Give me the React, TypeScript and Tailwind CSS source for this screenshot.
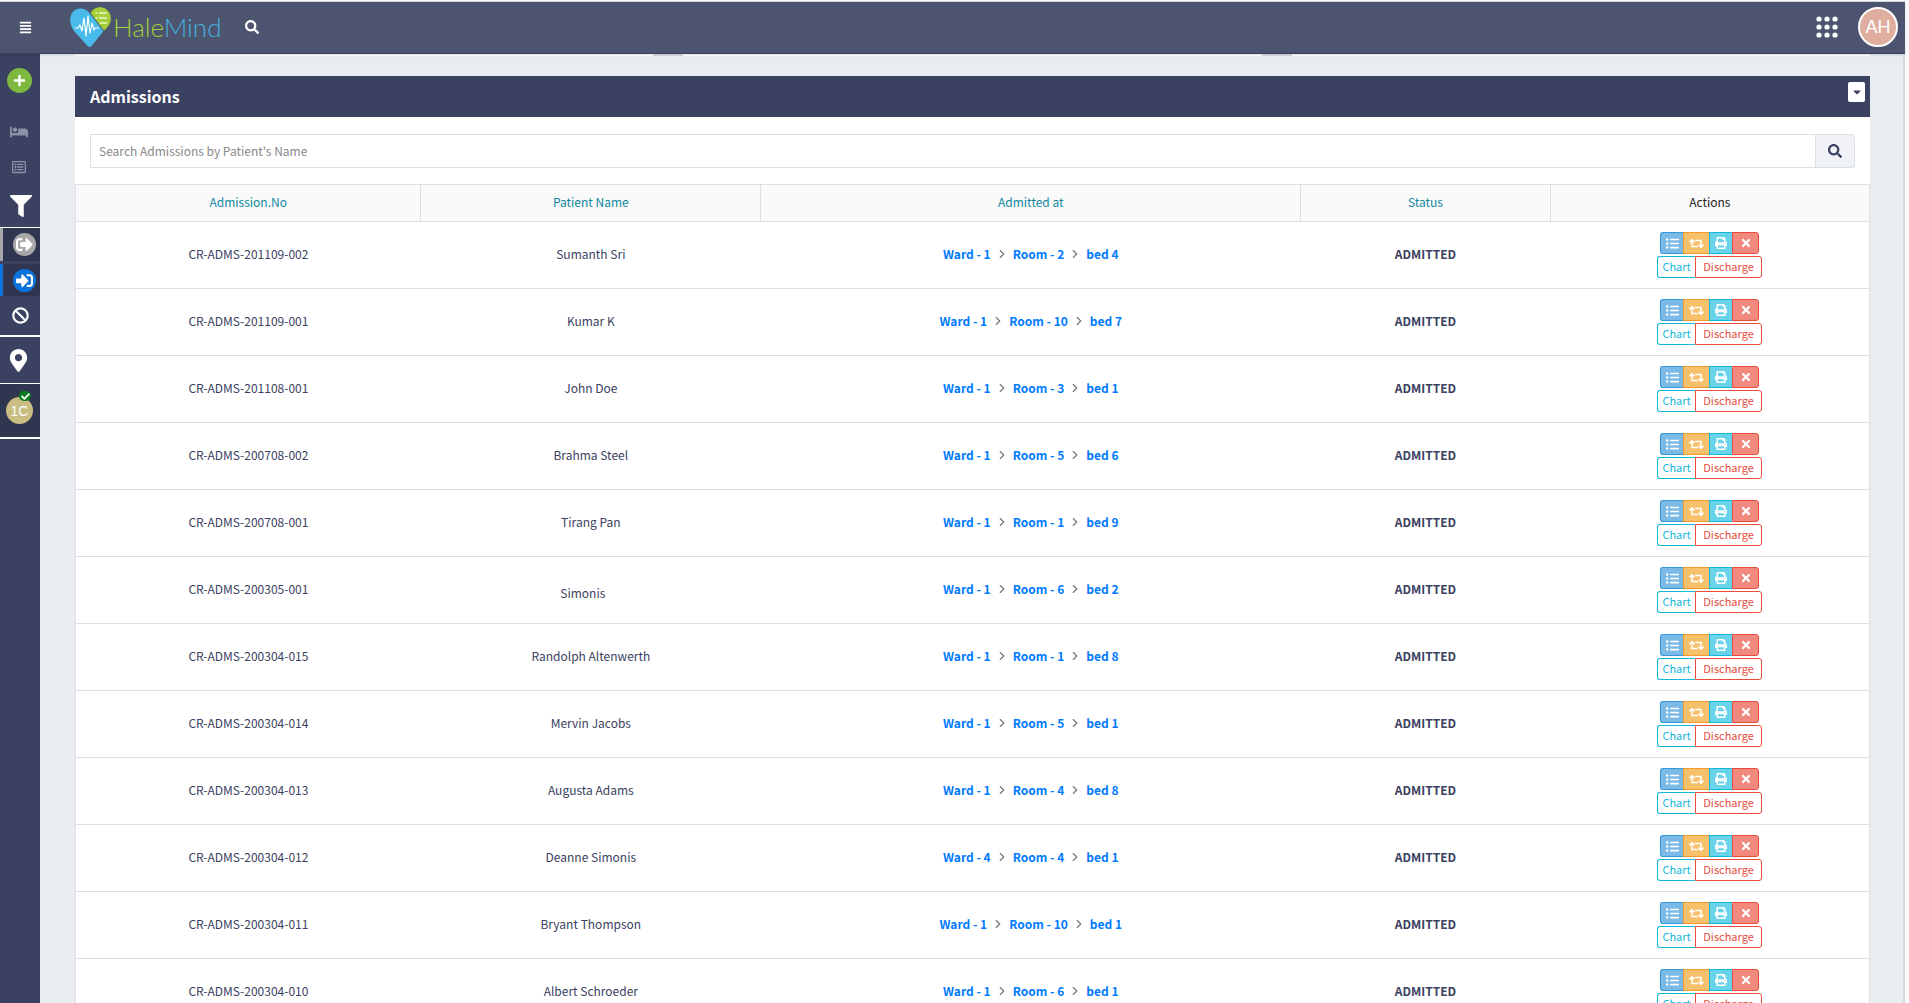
import React from "react";
import {
  FaAlignJustify, FaBan, FaBed, FaCaretDown, FaCheck, FaFilter, FaListUl,
  FaMapMarkerAlt, FaPlus, FaPrint, FaRegListAlt, FaRetweet, FaSearch, FaSignInAlt,
  FaSignOutAlt, FaTimes,
} from "react-icons/fa";
import { ChevronRight } from "lucide-react";

type Admission = { no: string; name: string; place: [string, string, string]; spacer?: boolean };

const admissions: Admission[] = [
  { no: "CR-ADMS-201109-002", name: "Sumanth Sri", place: ["Ward - 1", "Room - 2", "bed 4"] },
  { no: "CR-ADMS-201109-001", name: "Kumar K", place: ["Ward - 1", "Room - 10", "bed 7"] },
  { no: "CR-ADMS-201108-001", name: "John Doe", place: ["Ward - 1", "Room - 3", "bed 1"] },
  { no: "CR-ADMS-200708-002", name: "Brahma Steel", place: ["Ward - 1", "Room - 5", "bed 6"] },
  { no: "CR-ADMS-200708-001", name: "Tirang Pan", place: ["Ward - 1", "Room - 1", "bed 9"] },
  { no: "CR-ADMS-200305-001", name: "Simonis", place: ["Ward - 1", "Room - 6", "bed 2"], spacer: true },
  { no: "CR-ADMS-200304-015", name: "Randolph Altenwerth", place: ["Ward - 1", "Room - 1", "bed 8"] },
  { no: "CR-ADMS-200304-014", name: "Mervin Jacobs", place: ["Ward - 1", "Room - 5", "bed 1"] },
  { no: "CR-ADMS-200304-013", name: "Augusta Adams", place: ["Ward - 1", "Room - 4", "bed 8"] },
  { no: "CR-ADMS-200304-012", name: "Deanne Simonis", place: ["Ward - 4", "Room - 4", "bed 1"] },
  { no: "CR-ADMS-200304-011", name: "Bryant Thompson", place: ["Ward - 1", "Room - 10", "bed 1"] },
  { no: "CR-ADMS-200304-010", name: "Albert Schroeder", place: ["Ward - 1", "Room - 6", "bed 1"] },
];

function Logo() {
  return (
    <a href="#home" aria-label="HaleMind" className="flex items-center">
      <svg viewBox="0 0 41 40" className="h-10 w-[41px]" aria-hidden="true">
        <path d="M20.500 6.500 C23 0 31 -1.500 36 2 C41.500 6 42 13 39 18 C37 21 35 23 33.500 24 Z" fill="#a4cf38" />
        <path d="M20 6.500 C15 0 6 0 2 6 C-1 11 0 19 4 24 L17.500 39 Q19.500 41 21.500 39 L33.500 24 Z" fill="#49bbea" />
        <path d="M20 6 L34 24" stroke="#4d556f" strokeWidth="1" />
        <path d="M25.500 6h1.800M29 6h8M25.500 11h1.800M29 11h8M30 16h7" stroke="#eef7d2" strokeWidth="1.400" />
        <path d="M5 21h3l2-3 2 6 2-13 2 18 2-20 2 17 2-10 2 7 1-2h4" stroke="#fff" strokeWidth="1.200" fill="none" strokeLinejoin="round" />
      </svg>
      <span className="ml-[2px] font-['Lato'] text-[26px] font-light leading-10">
        <span className="text-[#a4cf38]">Hale</span>
        <span className="text-[#46b0dc]">Mind</span>
      </span>
    </a>
  );
}

function Navbar() {
  return (
    <header className="relative z-10 flex h-[52px] shrink-0 items-center border-b border-[#3b4163] bg-[#4d546f] pb-px pl-[19px] pr-[7px] text-white shadow">
      <button type="button" aria-label="Toggle menu"><FaAlignJustify className="size-[13px]" /></button>
      <div className="ml-[38px]"><Logo /></div>
      <button type="button" aria-label="Search" className="ml-6"><FaSearch className="size-[14px]" /></button>
      <button type="button" aria-label="Apps" className="ml-auto">
        <svg viewBox="0 0 22 22" className="size-[22px]" fill="#fff">
          {[3, 11, 19].map((y) => [3, 11, 19].map((x) => <circle key={`${x}-${y}`} cx={x} cy={y} r="2.600" />))}
        </svg>
      </button>
      <button type="button" className="ml-5 flex size-10 items-center justify-center rounded-full border-2 border-white bg-[#dfae9f] font-['Liberation_Sans'] text-lg">AH</button>
    </header>
  );
}

function Sidebar() {
  return (
    <nav className="flex w-10 shrink-0 flex-col bg-[#3a4161] text-white">
      <button type="button" aria-label="Add" className="ml-[7px] mt-[14px] flex size-[25px] items-center justify-center rounded-full bg-[#7cb93e]">
        <FaPlus className="size-[13px]" />
      </button>
      <a href="#beds" aria-label="Beds" className="mt-[30px] flex h-[17px] items-center pl-[10px] text-[#8d92a6]"><FaBed className="size-[18px]" /></a>
      <a href="#list" aria-label="List" className="mt-[18px] flex h-[17px] items-center pl-3 text-[#8d92a6]"><FaRegListAlt className="size-[14px]" /></a>
      <a href="#filter" aria-label="Filter" className="mt-[19px] flex h-[34px] items-center border-b border-white pb-[9px] pl-[10px]"><FaFilter className="size-[22px]" /></a>
      <a href="#out" aria-label="Discharged" className="flex h-[33px] items-center border-l-[3px] border-[#a8a8a8] bg-[#30364f] pl-[10px]">
        <span className="flex size-[23px] items-center justify-center rounded-full bg-[#a8a8a8]"><FaSignOutAlt className="size-[17px]" /></span>
      </a>
      <a href="#in" aria-label="Admitted" className="mt-[3px] flex h-8 items-center border-l-[3px] border-[#0a74da] bg-[#30364f] pl-[10px]">
        <span className="flex size-[23px] items-center justify-center rounded-full bg-[#0a74da]"><FaSignInAlt className="size-[17px]" /></span>
      </a>
      <a href="#cancelled" aria-label="Cancelled" className="flex h-[41px] items-center border-b-2 border-white pl-3"><FaBan className="size-[17px]" /></a>
      <a href="#location" aria-label="Location" className="flex h-[47px] items-center border-b border-white pl-[7px]"><FaMapMarkerAlt className="size-[23px]" /></a>
      <a href="#center" className="flex h-[55px] items-center border-b-2 border-white bg-[#30364f] pl-[6px]">
        <span className="relative flex size-[27px] items-center justify-center rounded-full bg-[#cabd82] font-['Liberation_Sans'] text-sm">
          1C
          <span className="absolute -top-[6px] left-[13px] flex h-[10px] w-3 items-center justify-center rounded-full bg-[#0a7d1f]"><FaCheck className="size-[9px]" /></span>
        </span>
      </a>
    </nav>
  );
}

function Actions() {
  return (
    <div className="flex flex-col items-center gap-[2px]">
      <div className="flex text-xs text-white">
        <button type="button" aria-label="Details" className="flex h-[22px] w-[23px] items-center justify-center rounded-l-[3px] border border-r-0 border-[#3498db] bg-[#7bbae6]"><FaListUl className="size-[13px]" /></button>
        <button type="button" aria-label="Transfer" className="flex h-[22px] w-[26px] items-center justify-center border border-r-0 border-[#f39c2d] bg-[#f7c16c]"><FaRetweet className="size-[15px]" /></button>
        <button type="button" aria-label="Print" className="flex h-[22px] w-[23px] items-center justify-center border border-r-0 border-[#13b8d9] bg-[#69d3ea]"><FaPrint className="size-3" /></button>
        <button type="button" aria-label="Cancel" className="flex h-[22px] w-[27px] items-center justify-center rounded-r-[3px] border border-[#e74c3c] bg-[#f1897f]"><FaTimes className="size-3" /></button>
      </div>
      <div className="flex text-[11px]">
        <button type="button" className="flex h-[22px] w-[38px] items-center justify-center rounded-l-[3px] border border-r-0 border-[#13b8d9] pb-px text-[#13b8d9]">Chart</button>
        <button type="button" className="flex h-[22px] w-[67px] items-center justify-center rounded-r-[3px] border border-[#e74c3c] pb-px text-[#e74c3c]">Discharge</button>
      </div>
    </div>
  );
}

function AdmissionsTable() {
  return (
    <table className="w-full table-fixed border-collapse border border-[#dedfe1] text-center text-xs">
      <colgroup>
        <col className="w-[19.25%]" />
        <col className="w-[18.95%]" />
        <col className="w-[30.1%]" />
        <col className="w-[13.9%]" />
        <col className="w-[17.8%]" />
      </colgroup>
      <thead>
        <tr className="h-[37px] bg-[#fafafa] text-[#0d87a0]">
          {["Admission.No", "Patient Name", "Admitted at", "Status"].map((h) => (
            <th key={h} scope="col" className="border border-[#dedfe1] pb-[2px] font-normal"><a href="#sort">{h}</a></th>
          ))}
          <th scope="col" className="border border-[#dedfe1] pb-[2px] font-normal text-[#222]">Actions</th>
        </tr>
      </thead>
      <tbody>
        {admissions.map((a) => (
          <tr key={a.no} className="h-[67px] border-b border-[#dedfe1]">
            <td className="pb-[2px]">{a.no}</td>
            <td className="pb-[2px]">{a.name}{a.spacer && <span className="inline-block h-5 w-4" />}</td>
            <td className="pb-[2px]">
              <a href="#bed" className="inline-flex items-center font-bold text-[#007bff]">
                {a.place[0]}
                <ChevronRight className="mx-1 size-[14px] text-[#777]" />
                {a.place[1]}
                <ChevronRight className="mx-1 size-[14px] text-[#777]" />
                {a.place[2]}
              </a>
            </td>
            <td className="pb-[2px] font-bold">ADMITTED</td>
            <td><Actions /></td>
          </tr>
        ))}
      </tbody>
    </table>
  );
}

export default function App() {
  return (
    <div className="flex h-screen flex-col overflow-hidden bg-[#fbfbfb] pr-1 pt-px font-['Noto_Sans_CJK_SC',sans-serif] text-[#3a4161]">
      <div className="h-px shrink-0 bg-[#d6d9de]" />
      <Navbar />
      <div className="flex min-h-0 flex-1">
        <Sidebar />
        <main className="min-w-0 flex-1 overflow-hidden border-r-2 border-[#d5d9df] bg-[#e9ecf1] pl-[35px] pr-[33px]">
          <div className="flex h-[2px] bg-[#d9dae0]">
            <div className="flex-[577] bg-white" />
            <div className="w-[30px]" />
            <div className="flex-[579] bg-white" />
            <div className="w-[30px]" />
            <div className="flex-[577] bg-white" />
          </div>
          <section className="mt-5 bg-white">
            <header className="flex h-[41px] items-center bg-[#3a4161] pl-[15px] pr-[5px] text-white">
              <h2 className="pb-[2px] text-base font-bold">Admissions</h2>
              <button type="button" aria-label="Collapse" className="mb-[9px] ml-auto flex h-5 w-[17px] items-center justify-center rounded-[2px] bg-white text-[#3a4161]"><FaCaretDown className="size-3" /></button>
            </header>
            <form className="flex px-[15px] pb-4 pt-[17px]">
              <input aria-label="Search admissions" placeholder="Search Admissions by Patient's Name" className="h-[34px] min-w-0 flex-1 border border-[#dbe0e8] px-2 pb-[2px] text-xs placeholder:text-[#888]" />
              <button type="button" aria-label="Search" className="flex h-[34px] w-[39px] items-center justify-center rounded-r border border-l-0 border-[#dbe0e8] bg-[#f0f2f7]"><FaSearch className="size-[14px]" /></button>
            </form>
            <AdmissionsTable />
          </section>
        </main>
      </div>
    </div>
  );
}
